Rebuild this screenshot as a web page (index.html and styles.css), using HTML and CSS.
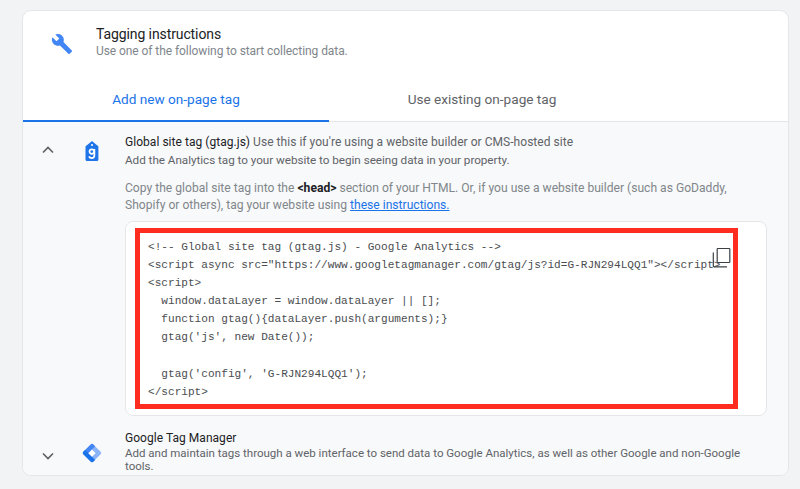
FILE: index.html
```html
<!DOCTYPE html>
<html lang="en">
<head>
<meta charset="utf-8">
<title>Tagging instructions</title>
<link rel="stylesheet" href="styles.css">
</head>
<body>
<main class="card">
  <header class="head">
    <svg class="wrench" viewBox="0 0 24 24" width="26" height="26"><path fill="#4285f4" d="M22.7 19l-9.1-9.1c.9-2.3.4-5-1.5-6.9-2-2-5-2.4-7.4-1.3L9 6 6 9 1.6 4.7C.4 7.1.9 10.1 2.9 12.1c1.9 1.9 4.6 2.4 6.9 1.5l9.1 9.1c.4.4 1 .4 1.4 0l2.3-2.3c.5-.4.5-1.1.1-1.4z"/></svg>
    <div class="head-text">
      <h1 class="title">Tagging instructions</h1>
      <p class="sub">Use one of the following to start collecting data.</p>
    </div>
  </header>
  <nav class="tabs">
    <div class="tab tab-active">Add new on-page tag</div>
    <div class="tab">Use existing on-page tag</div>
  </nav>
  <section class="body">
    <div class="row row-first">
      <svg class="chev" viewBox="0 0 12 8" width="12" height="8"><path d="M1 6.5L6 1.5l5 5" fill="none" stroke="#5f6368" stroke-width="1.7"/></svg>
      <svg class="logo logo-tag" viewBox="0 0 14 20" width="14" height="20"><path fill="#1f74e8" d="M7 0l5 4.2c.9.4 1.4 1 1.4 2V18.500c0 .9-.6 1.500-1.500 1.500H2c-.9 0-1.500-.6-1.500-1.500V6.200c0-1 .5-1.600 1.400-2z"/><circle cx="7" cy="3.900" r="1" fill="#fff"/><circle cx="6.800" cy="10.600" r="2.300" fill="none" stroke="#fff" stroke-width="1.700"/><path d="M9.400 8v6.300c0 1.800-1.100 2.800-2.700 2.800-1.200 0-2.300-.6-2.700-1.700" fill="none" stroke="#fff" stroke-width="1.700"/></svg>
      <div class="row-text">
        <p class="row-title"><span class="dark">Global site tag (gtag.js)</span> Use this if you're using a website builder or CMS-hosted site</p>
        <p class="row-sub">Add the Analytics tag to your website to begin seeing data in your property.</p>
      </div>
    </div>
    <p class="copy">Copy the global site tag into the <b class="strong">&lt;head&gt;</b> section of your HTML. Or, if you use a website builder (such as GoDaddy, Shopify or others), tag your website using <a class="link" href="#">these instructions.</a></p>
    <div class="code-card">
      <pre class="code">&lt;!-- Global site tag (gtag.js) - Google Analytics --&gt;
&lt;script async src="https://www.googletagmanager.com/gtag/js?id=G-RJN294LQQ1"&gt;&lt;/script&gt;
&lt;script&gt;
  window.dataLayer = window.dataLayer || [];
  function gtag(){dataLayer.push(arguments);}
  gtag('js', new Date());

  gtag('config', 'G-RJN294LQQ1');
&lt;/script&gt;</pre>
      <svg class="copy-icon" viewBox="0 0 20 22" width="20" height="22"><path d="M6.700 1.500h11.600a.5.5 0 0 1 .5.5v13a.5.5 0 0 1-.5.5H6.700a.5.5 0 0 1-.5-.5V2a.5.5 0 0 1 .5-.5z" fill="#fff" stroke="#3c4043" stroke-width="1.200"/><path d="M2.300 5.500V19a.8.8 0 0 0 .8.8H16" fill="none" stroke="#3c4043" stroke-width="1.200"/></svg>
    </div>
    <div class="row row-last">
      <svg class="chev" viewBox="0 0 12 8" width="12" height="8"><path d="M1 1.500l5 5 5-5" fill="none" stroke="#5f6368" stroke-width="1.700"/></svg>
      <svg class="logo" viewBox="0 0 22 22" width="20" height="20"><g transform="rotate(45 11 11)"><rect x="3.300" y="3.300" width="15.400" height="15.400" rx="2" fill="#8ab4f8"/><path d="M5.300 3.300H8.300V14H18.700V16.700a2 2 0 0 1-2 2H5.300a2 2 0 0 1-2-2V5.300a2 2 0 0 1 2-2z" fill="#4285f4"/><path d="M3.300 14H18.700V16.700a2 2 0 0 1-2 2H5.300a2 2 0 0 1-2-2z" fill="#1a73e8"/><rect x="8.300" y="8.300" width="5.700" height="5.700" fill="#fff"/></g></svg>
      <div class="row-text">
        <p class="row-title"><span class="dark">Google Tag Manager</span></p>
        <p class="row-sub">Add and maintain tags through a web interface to send data to Google Analytics, as well as other Google and non-Google tools.</p>
      </div>
    </div>
  </section>
</main>
</body>
</html>
```
FILE: styles.css
```css
* { box-sizing: border-box; }
html, body { margin: 0; height: 489px; overflow: hidden; }
body {
  background: #f1f3f4;
  padding: 10px 11px 0 22px;
  font-family: Roboto, "Liberation Sans", sans-serif;
  color: #5f6368;
}
p, h1 { margin: 0; }
.card {
  height: 466px;
  border: 1px solid #e4e6e8;
  border-radius: 9px;
  background: #fff;
  overflow: hidden;
}
.head {
  display: flex;
  align-items: flex-start;
  height: 74px;
  padding: 14px 0 0 28px;
}
.wrench { margin: 8px 0 0 0; width: 22px; height: 22px; flex: none; }
.head-text { margin-left: 23px; }
.title { font-size: 14px; font-weight: 400; line-height: 18px; color: #202124; letter-spacing: -.1px; }
.sub { font-size: 12px; line-height: 17px; color: #80868b; letter-spacing: -.07px; }
.tabs { display: flex; height: 37px; border-bottom: 1px solid #e4e6e8; }
.tab {
  width: 306px;
  height: 37px;
  font-size: 13.600px;
  line-height: 28px;
  text-align: center;
  color: #5f6368;
}
.tab-active { color: #1a73e8; border-bottom: 2px solid #1a73e8; }
.body { background: #f8f9fa; height: 354px; padding-left: 19px; }
.row { display: flex; align-items: center; width: 724px; }
.row-first { padding-top: 12px; }
.row-last { padding-top: 14px; }
.chev { flex: none; width: 12px; }
.row-first .chev { margin-bottom: 3px; }
.row-last .chev { margin-top: 8px; }
.logo { flex: none; margin-left: 28px; }
.row-last .logo { margin-top: 2px; }
.logo-tag { margin-left: 31px; margin-right: 3px; }
.row-text { margin-left: 23px; flex: 1; }
.row-title { font-size: 12px; line-height: 17px; color: #5f6368; letter-spacing: .04px; }
.row-first .row-title { margin-bottom: 1px; }
.dark { color: #202124; }
.row-sub { font-size: 11.700px; line-height: 16px; color: #5f6368; letter-spacing: -.03px; }
.row-last .row-sub { font-size: 11.500px; line-height: 13px; letter-spacing: 0; }
.copy {
  margin: 12px 0 0 83px;
  width: 640px;
  font-size: 12.100px;
  line-height: 17px;
  color: #80868b;
}
.strong { color: #202124; font-weight: 700; }
.link { color: #1a73e8; }
.code-card {
  position: relative;
  margin: 7px 0 0 83px;
  width: 642px;
  height: 195px;
  padding: 6px 28px 8px 9px;
  background: #fff;
  border: 1px solid #e4e6e8;
  border-radius: 8px;
}
.code {
  margin: 0;
  height: 181px;
  padding: 4.500px 0 0 8px;
  border: 5px solid #ff2d20;
  font-family: "Liberation Mono", monospace;
  font-size: 11.100px;
  line-height: 18.150px;
  color: #4a4d50;
  overflow: hidden;
}
.copy-icon { position: absolute; left: 585px; top: 25px; }
```
